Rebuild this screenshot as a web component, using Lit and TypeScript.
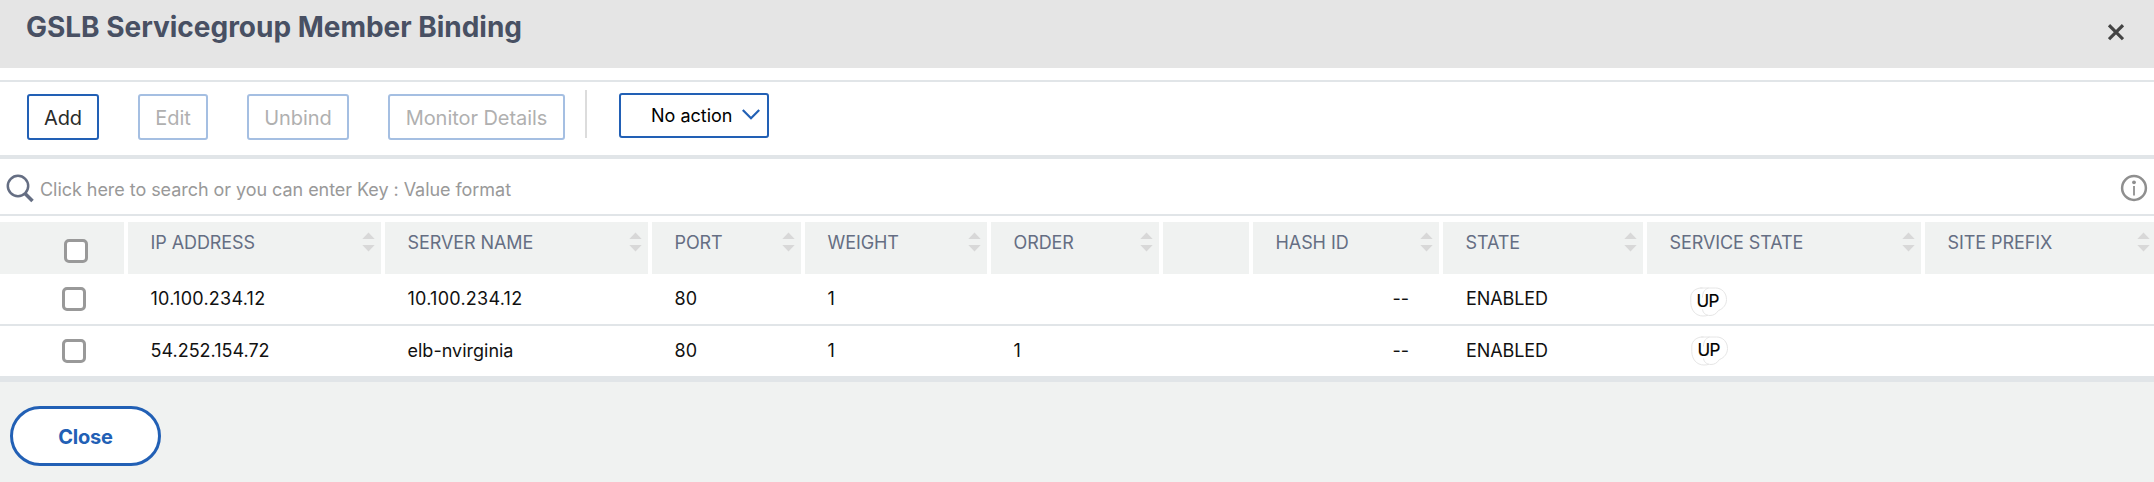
import { LitElement, html, css, svg } from "lit";
import { customElement } from "lit/decorators.js";

interface Column {
  label: string;
  sortable: boolean;
}

interface Member {
  ip: string;
  server: string;
  port: string;
  weight: string;
  order: string;
  hash: string;
  state: string;
  service: string;
}

const COLUMNS: Column[] = [
  { label: "IP ADDRESS", sortable: true },
  { label: "SERVER NAME", sortable: true },
  { label: "PORT", sortable: true },
  { label: "WEIGHT", sortable: true },
  { label: "ORDER", sortable: true },
  { label: "", sortable: false },
  { label: "HASH ID", sortable: true },
  { label: "STATE", sortable: true },
  { label: "SERVICE STATE", sortable: true },
  { label: "SITE PREFIX", sortable: true },
];

const MEMBERS: Member[] = [
  { ip: "10.100.234.12", server: "10.100.234.12", port: "80", weight: "1", order: "", hash: "--", state: "ENABLED", service: "UP" },
  { ip: "54.252.154.72", server: "elb-nvirginia", port: "80", weight: "1", order: "1", hash: "--", state: "ENABLED", service: "UP" },
];

@customElement("app-root")
export class AppRoot extends LitElement {
  static styles = css`
    :host {
      display: flex;
      flex-direction: column;
      height: 482px;
      background: #fff;
      color: #111;
      font: 18px/24px Inter, "Liberation Sans", sans-serif;
      overflow: hidden;
    }
    * { box-sizing: border-box; }
    svg { display: block; flex: none; }
    button { font: inherit; background: #fff; padding: 0; margin: 0; }
    .head, .toolbar, .search, .row { flex: none; }
    .head {
      display: flex;
      justify-content: space-between;
      height: 68px;
      padding: 10px 30px 0 26px;
      background: #e5e5e5;
    }
    h1 { margin: 0; font-size: 28px; line-height: 34px; font-weight: 700; color: #485063; letter-spacing: -0.02px; }
    .x { margin-top: 14px; }
    .toolbar {
      display: flex;
      align-items: flex-start;
      height: 79px;
      margin-top: 12px;
      padding: 12px 0 0 27px;
      border-top: 2px solid #e1e5e8;
      border-bottom: 4px solid #e1e5e8;
    }
    .btn {
      height: 46px;
      margin-right: 39px;
      padding-top: 2px;
      border: 2px solid #a5bfe2;
      border-radius: 3px;
      font-size: 20px;
      letter-spacing: -0.05px;
      color: #b0b0b0;
    }
    .btn.add { width: 72px; border-color: #2260b5; color: #2b2b2b; }
    .btn.edit { width: 70px; }
    .btn.unbind { width: 102px; }
    .btn.monitor { width: 177px; margin-right: 20px; }
    .rule { width: 2px; height: 48px; margin: -4px 32px 0 0; background: #dcdcdc; }
    .select {
      display: flex;
      align-items: center;
      width: 150px;
      height: 45px;
      margin-top: -1px;
      padding-left: 30px;
      border: 2px solid #2260b5;
      border-radius: 3px;
      color: #000;
    }
    .select svg { margin: -2px 0 0 10px; }
    .search {
      display: flex;
      height: 57px;
      padding: 15px 6px 0;
      border-bottom: 2px solid #e1e5e8;
      color: #999;
    }
    .search span { flex: 1; margin: 4px 0 0 5px; letter-spacing: -0.05px; }
    .row {
      display: grid;
      grid-template-columns: 124px 253px 263px 149px 182px 168px 86px 186px 200px 274px 229px;
      column-gap: 4px;
    }
    .row.titles { height: 52px; margin-top: 6px; color: #656e83; letter-spacing: -0.08px; }
    .row.member { height: 50px; align-items: start; }
    .row.member + .row.member { height: 52px; border-top: 2px solid #e1e5e8; }
    .th { display: flex; justify-content: space-between; padding: 9px 6px 0 22.5px; background: #f0f2f1; }
    .th:last-child { padding-right: 4px; }
    .th svg { margin-top: 1px; }
    .td { padding: 13px 0 0 22.5px; }
    .row.titles + .row.member .addr { letter-spacing: 0.25px; }
    .td.right { text-align: right; padding-right: 30px; }
    .td.state { padding-left: 23px; letter-spacing: -0.08px; }
    .td.service { padding: 13px 0 0 43px; }
    .row.member + .row.member .td.service { padding: 10px 0 0 44px; }
    .check { display: flex; padding: 0 0 0 64px; background: #f0f2f1; }
    .titles .check { padding-top: 17px; }
    .member .check { background: none; padding: 13px 0 0 62px; }
    .box { width: 24px; height: 24px; border: 3px solid #999; border-radius: 5px; background: #fff; }
    .foot { flex: 1; border-top: 6px solid #e1e5e8; background: #f0f2f1; padding: 24px 10px; }
    .close {
      width: 151px;
      height: 60px;
      padding-top: 2px;
      border: 3px solid #2260b5;
      border-radius: 30px;
      color: #2260b5;
      font-size: 20px;
      font-weight: 700;
      letter-spacing: -0.2px;
    }
  `;

  private sortIcon() {
    return svg`<svg width="13" height="20" viewBox="0 0 13 20" fill="#d8d8d8"><path d="M.3 7 6.500.4 12.700 7z"/><path d="M.3 13h12.400l-6.200 6.600z"/></svg>`;
  }

  private statusBadge(text: string) {
    return svg`<svg width="38" height="30" viewBox="0 0 38 30">
      <g fill="none" stroke="#e6e6e6" stroke-width="1">
        <path d="M12.500 1C6 .5.800 5 .8 10v5.500C.8 23 5.500 29 13 29c2 0 3.500-.2 5-.8"/>
        <path d="M10 1h15.500C32 1 36.500 6 36.500 12.500c0 5-3 9-8 11-2.500 3.500-5 5-8.500 5-4.500 0-7-2.500-7.500-6M18.500 1C14 2.500 12.500 6 12.500 10.500"/>
      </g>
      <text x="6.500" y="20.400" font-size="17" font-weight="400" letter-spacing="-.6" fill="#000" stroke="#000" stroke-width=".2">${text}</text>
    </svg>`;
  }

  render() {
    return html`
      <div class="head">
        <h1>GSLB Servicegroup Member Binding</h1>
        <svg class="x" width="16" height="17" viewBox="0 0 16 17" fill="none" stroke="#444" stroke-width="3.200" stroke-linecap="butt">
          <path d="M1 1.200 15 15.200M15 1.200 1 15.200" />
        </svg>
      </div>
      <div class="toolbar">
        <button class="btn add">Add</button>
        <button class="btn edit">Edit</button>
        <button class="btn unbind">Unbind</button>
        <button class="btn monitor">Monitor Details</button>
        <div class="rule"></div>
        <div class="select">
          No action
          <svg width="18" height="11" viewBox="0 0 18 11" fill="none" stroke="#2260b5" stroke-width="2.200"><path d="M.8 1 9 9.200 17.200 1" /></svg>
        </div>
      </div>
      <div class="search">
        <svg width="29" height="29" viewBox="0 0 29 29" fill="none" stroke="#656e83">
          <circle cx="12" cy="12" r="10.200" stroke-width="2.500" />
          <path d="m19 19.500 7.500 7.500" stroke-width="3.500" />
        </svg>
        <span>Click here to search or you can enter Key : Value format</span>
        <svg width="28" height="28" viewBox="0 0 28 28">
          <circle cx="14" cy="14" r="11.900" fill="none" stroke="#8f8f8f" stroke-width="2.500" />
          <circle cx="14" cy="8.300" r="1.900" fill="#8f8f8f" />
          <path d="M13.100 12h1.800v9.500h-1.800z" fill="#8f8f8f" />
        </svg>
      </div>
      <div class="row titles">
        <div class="check"><div class="box"></div></div>
        ${COLUMNS.map(
          (c) => html`<div class="th"><span>${c.label}</span>${c.sortable ? this.sortIcon() : ""}</div>`
        )}
      </div>
      ${MEMBERS.map(
        (m) => html`<div class="row member">
          <div class="check"><div class="box"></div></div>
          <div class="td addr">${m.ip}</div>
          <div class="td addr">${m.server}</div>
          <div class="td">${m.port}</div>
          <div class="td">${m.weight}</div>
          <div class="td">${m.order}</div>
          <div class="td"></div>
          <div class="td right">${m.hash}</div>
          <div class="td state">${m.state}</div>
          <div class="td service">${this.statusBadge(m.service)}</div>
          <div class="td"></div>
        </div>`
      )}
      <div class="foot"><button class="close">Close</button></div>
    `;
  }
}
